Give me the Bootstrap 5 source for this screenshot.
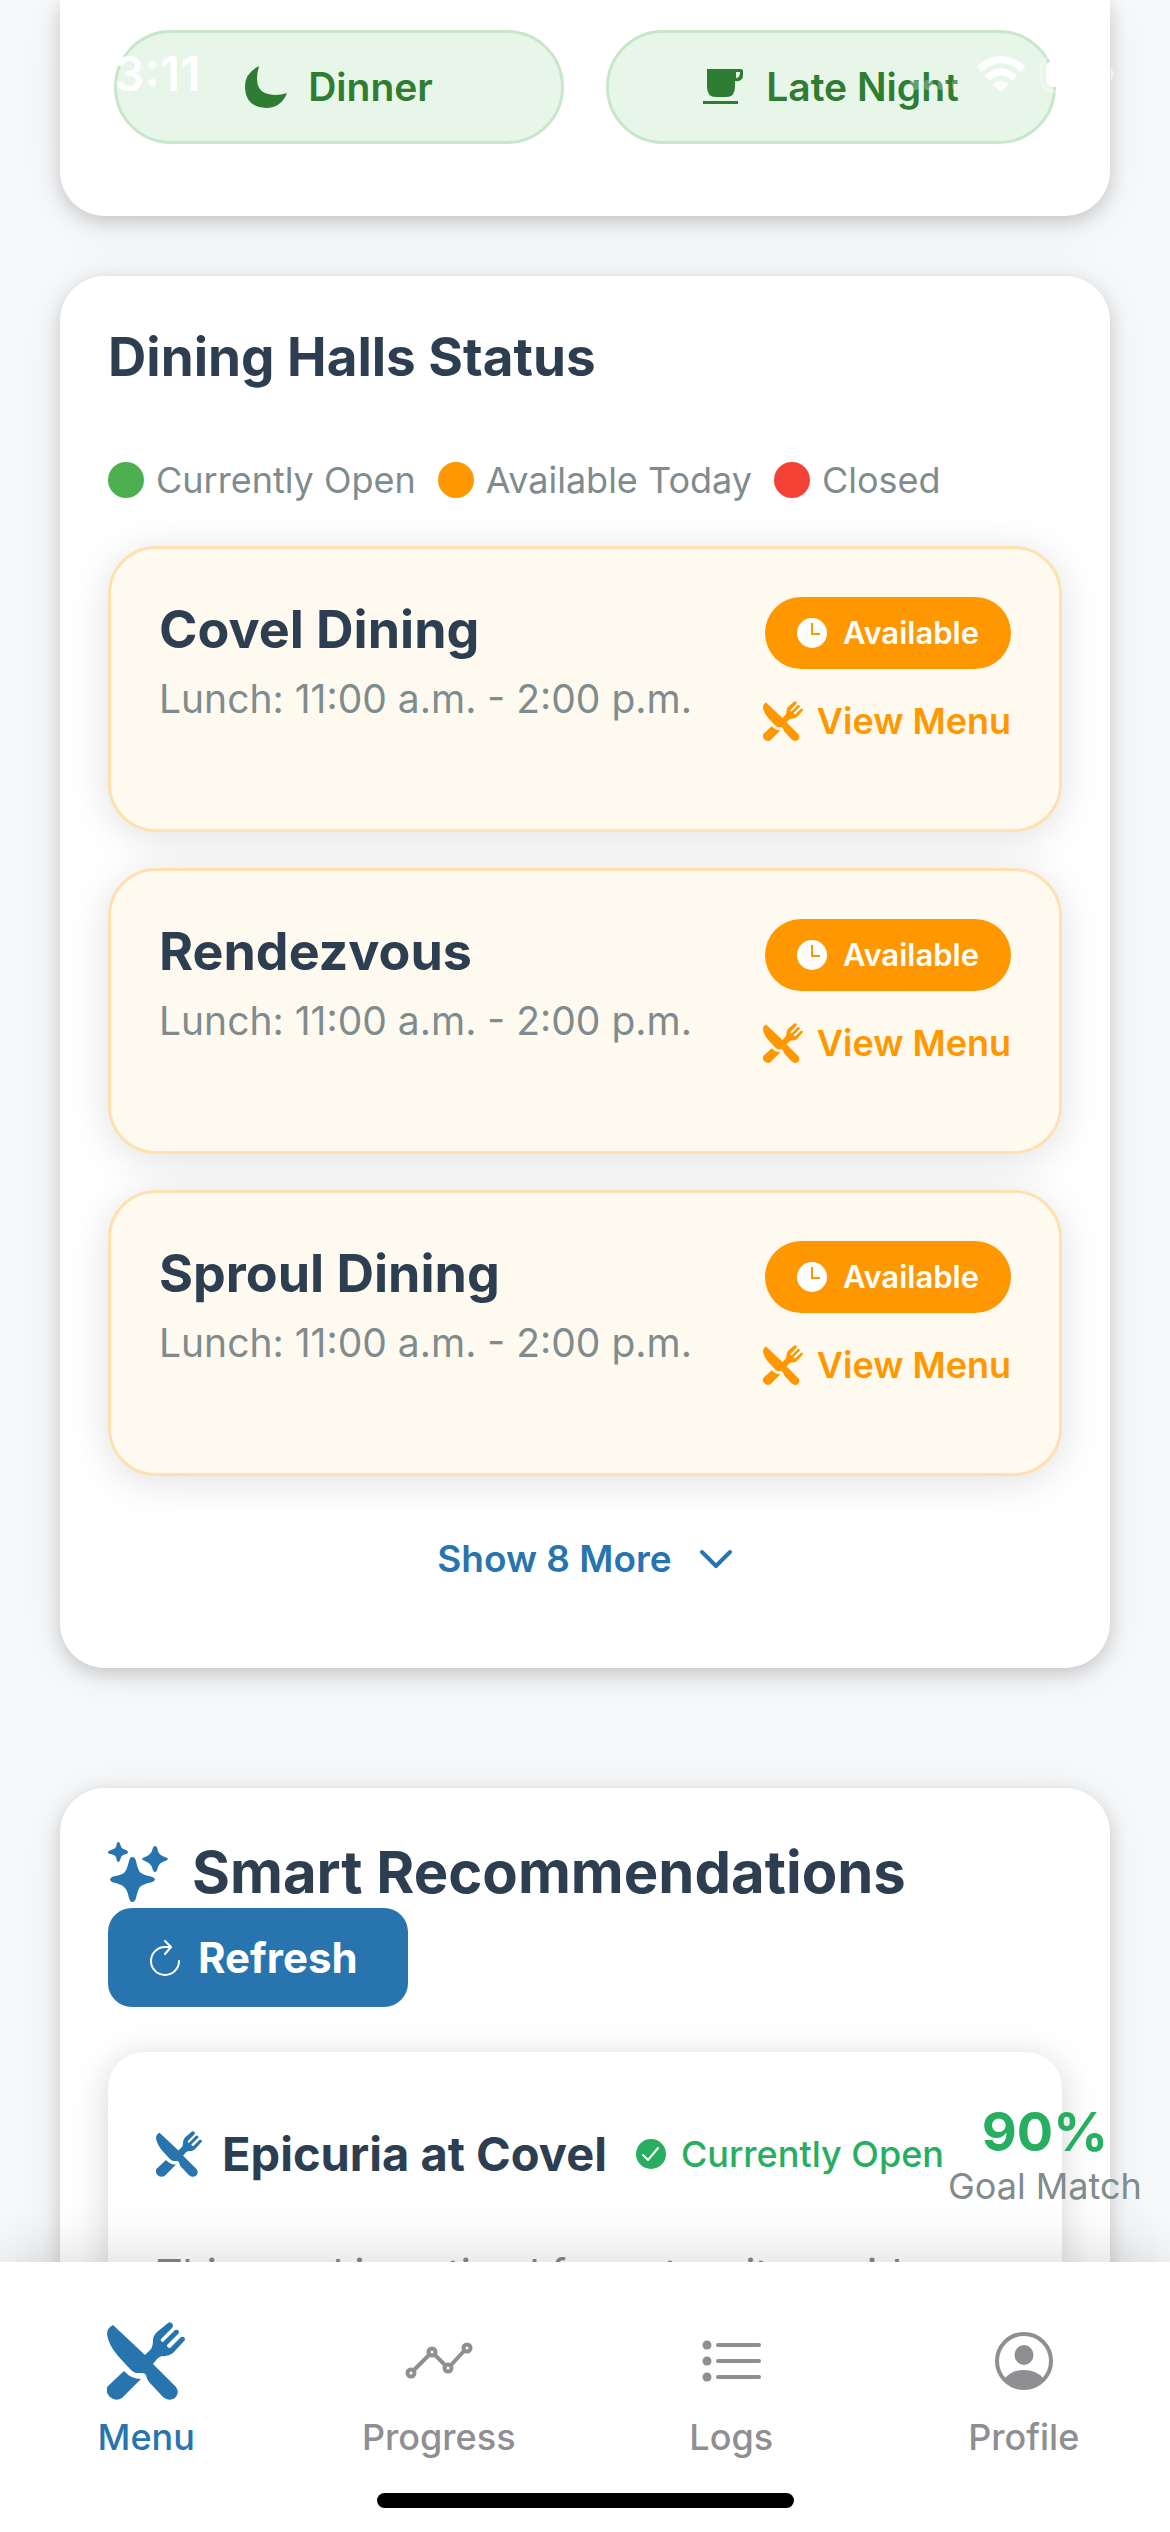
<!DOCTYPE html>
<html lang="en">
<head>
<meta charset="utf-8">
<meta name="viewport" content="width=device-width, initial-scale=1">
<title>Dining Halls</title>
<link href="https://cdn.jsdelivr.net/npm/bootstrap@5.3.0/dist/css/bootstrap.min.css" rel="stylesheet">
<style>
  :root { --ink: #2c3e50; --muted: #7f8c8d; --brand: #2874ae; --amber: #ff9800; --leaf: #2e7d32; --ok: #27ae60; --tab: #8e8e93; }
  html, body { height: 100%; }
  body { font-family: Inter, "Liberation Sans", sans-serif; font-size: 36px; line-height: 44px; color: var(--ink); background: #f8f9fb; }
  svg { display: block; flex: none; }
  .app-shell { height: 100vh; overflow: hidden; }
  .scroll-area { min-height: 0; overflow: hidden; padding: 0 60px; }
  .panel { background: #fff; border-radius: 45px; padding: 48px; box-shadow: 0 6px 18px rgba(0,0,0,.16), 0 6px 54px rgba(0,0,0,.08); }
  .panel-meals { border-top-left-radius: 0; border-top-right-radius: 0; padding: 30px 54px 72px; margin-bottom: 60px; }
  .panel-halls { margin-bottom: 120px; padding-bottom: 72px; }
  .meal-grid { gap: 42px; }
  .meal-btn { flex: 1 1 0; height: 114px; gap: 21px; border: 3px solid #c8e6c9; border-radius: 57px; background: #e8f5e9; color: var(--leaf); font-size: 39px; font-weight: 600; }
  .panel-title { font-size: 53px; line-height: 66px; font-weight: 700; margin: 0; }
  .legend { gap: 22px; margin: 69px 0 45px; color: var(--muted); font-size: 36px; line-height: 42px; list-style: none; padding: 0; }
  .legend li { gap: 12px; }
  .dot { width: 36px; height: 36px; border-radius: 50%; }
  .dot-open { background: #4caf50; } .dot-today { background: var(--amber); } .dot-closed { background: #f44336; }
  .hall-list { gap: 36px; }
  .hall { height: 286px; padding: 48px; border: 3px solid #ffe0b2; border-radius: 48px; background: #fffaf0; box-shadow: 0 6px 42px rgba(0,0,0,.12); }
  .hall-name { font-size: 52px; line-height: 66px; font-weight: 700; margin: 0; }
  .hall-hours { color: var(--muted); font-size: 39px; line-height: 48px; margin: 12px 0 0; }
  .hall-badge { height: 72px; padding: 0 32px; gap: 16px; border-radius: 36px; background: var(--amber); color: #fff; font-size: 31px; font-weight: 600; }
  .link-menu { gap: 14px; margin-top: 30px; color: var(--amber); font-weight: 600; text-decoration: none; }
  .show-more { margin: 46px auto 0; padding: 15px 24px; gap: 27px; border: 0; background: none; color: var(--brand); font-size: 37px; line-height: 44px; font-weight: 600; }
  .rec-title { font-size: 58px; line-height: 72px; font-weight: 700; margin: 0; }
  .rec-head { gap: 24px; }
  .refresh-btn { width: 300px; height: 99px; padding: 0 41px; gap: 17px; border: 0; border-radius: 24px; background: var(--brand); color: #fff; font-size: 42px; font-weight: 700; }
  .rec { margin-top: 45px; padding: 48px; height: 400px; border-radius: 36px; background: #fff; box-shadow: 0 6px 36px rgba(0,0,0,.17); }
  .rec-name { font-size: 47px; line-height: 60px; font-weight: 700; margin: 0 0 0 20px; }
  .rec-open { gap: 15px; color: var(--ok); margin: 0 4px 0 29px; font-weight: 500; }
  .score { color: var(--ok); font-size: 54px; line-height: 64px; font-weight: 700; }
  .score-label { color: var(--muted); }
  .rec-text { color: var(--muted); font-size: 41px; line-height: 54px; margin: 39px 0 0; }
  .tabs { position: relative; z-index: 2; height: 270px; background: #fff; box-shadow: 0 -6px 54px rgba(0,0,0,.14); }
  .tab { padding-top: 54px; color: var(--tab); font-weight: 500; text-decoration: none; }
  .tab.active { color: var(--brand); }
  .tab svg { margin-bottom: 9px; }
  .home-bar { width: 417px; height: 15px; margin: auto auto 24px; border-radius: 8px; background: #000; }
  .status-bar { position: absolute; inset: 0 0 auto 0; height: 148px; padding: 0 54px 0 114px; color: #fff; font-size: 48px; font-weight: 600; z-index: 3; }
  .status-icons { gap: 15px; }
</style>
</head>
<body>
<svg width="0" height="0" class="position-absolute" aria-hidden="true">
  <symbol id="cutlery" viewBox="0 0 78 78">
    <path d="M6 3 38 33 44 27Q46 24 46 18Q46 14 50 10L61 1Q64-1 66 3Q66 5 65 6L54 17Q53 20 56 20L68 8Q72 7 72 11L60 23Q60 26 63 26L74 15Q78 14 78 18L66 31Q61 35 55 34Q52 35 50 37L46 42 69 65Q73 71 68 76Q62 80 56 75L42 60Q40 58 39 53Q38 51 35 51H29Q26 50 24 48L11 34Q1 22 0 12Q0 6 6 3Z" fill="currentColor"/>
    <path d="M17 49Q24 57 34 57L15 76Q9 80 3 75Q-3 69 1 64Z" fill="currentColor"/>
  </symbol>
  <symbol id="clock" viewBox="0 0 30 30"><circle cx="15" cy="15" r="15" fill="#fff"/><path d="M15 5v11h8" fill="none" stroke="#ff9800" stroke-width="2"/></symbol>
</svg>

<div class="app-shell d-flex flex-column position-relative">
  <div class="status-bar d-flex align-items-center justify-content-between">
    <span>3:11</span>
    <span class="status-icons d-flex align-items-center">
      <svg width="52" height="36" viewBox="0 0 52 36"><g fill="#fff" opacity=".25"><rect x="0" y="24" width="9" height="10" rx="3"/><rect x="14" y="24" width="9" height="10" rx="3"/><rect x="28" y="24" width="9" height="10" rx="3"/><rect x="42" y="24" width="9" height="10" rx="3"/></g></svg>
      <svg width="48" height="36" viewBox="0 0 48 36"><g fill="none" stroke="#fff" stroke-width="7"><path d="M2 13Q24-6 46 13"/><path d="M10 22Q24 10 38 22"/></g><path d="M24 36 16 28Q24 22 32 28Z" fill="#fff"/></svg>
      <svg width="76" height="38" viewBox="0 0 76 38"><rect x="1.500" y="1.500" width="66" height="35" rx="11" fill="none" stroke="#fff" stroke-width="3" opacity=".35"/><rect x="6" y="6" width="57" height="26" rx="7" fill="#fff"/><path d="M71 13q5 6 0 12z" fill="#fff" opacity=".6"/></svg>
    </span>
  </div>

  <main class="scroll-area flex-grow-1">
    <section class="panel panel-meals">
      <div class="meal-grid d-flex">
        <button type="button" class="meal-btn d-flex align-items-center justify-content-center">
          <svg width="42" height="42" viewBox="0 0 42 42"><path d="M14 0Q8 22 20 27Q30 31 42 27Q36 42 21 42Q0 41 0 20Q0 7 14 0Z" fill="currentColor"/></svg>
          Dinner
        </button>
        <button type="button" class="meal-btn d-flex align-items-center justify-content-center">
          <svg width="42" height="36" viewBox="0 0 42 36"><path fill-rule="evenodd" d="M4 0H38Q40 0 40 2V6Q40 13 32 12V18Q32 28 23 28H13Q4 28 4 18ZM33 3V9Q37 9 37 3ZM0 32H35V35H0Z" fill="currentColor"/></svg>
          Late Night
        </button>
      </div>
    </section>

    <section class="panel panel-halls d-flex flex-column">
      <h2 class="panel-title">Dining Halls Status</h2>
      <ul class="legend d-flex">
        <li class="d-flex align-items-center"><span class="dot dot-open"></span>Currently Open</li>
        <li class="d-flex align-items-center"><span class="dot dot-today"></span>Available Today</li>
        <li class="d-flex align-items-center"><span class="dot dot-closed"></span>Closed</li>
      </ul>
      <div class="hall-list d-flex flex-column">
        <article class="hall d-flex justify-content-between">
          <div><h3 class="hall-name">Covel Dining</h3><p class="hall-hours">Lunch: 11:00 a.m. - 2:00 p.m.</p></div>
          <div class="d-flex flex-column align-items-end">
            <span class="hall-badge d-flex align-items-center"><svg width="30" height="30"><use href="#clock"/></svg>Available</span>
            <a href="#" class="link-menu d-flex align-items-center"><svg width="40" height="40"><use href="#cutlery"/></svg>View Menu</a>
          </div>
        </article>
        <article class="hall d-flex justify-content-between">
          <div><h3 class="hall-name">Rendezvous</h3><p class="hall-hours">Lunch: 11:00 a.m. - 2:00 p.m.</p></div>
          <div class="d-flex flex-column align-items-end">
            <span class="hall-badge d-flex align-items-center"><svg width="30" height="30"><use href="#clock"/></svg>Available</span>
            <a href="#" class="link-menu d-flex align-items-center"><svg width="40" height="40"><use href="#cutlery"/></svg>View Menu</a>
          </div>
        </article>
        <article class="hall d-flex justify-content-between">
          <div><h3 class="hall-name">Sproul Dining</h3><p class="hall-hours">Lunch: 11:00 a.m. - 2:00 p.m.</p></div>
          <div class="d-flex flex-column align-items-end">
            <span class="hall-badge d-flex align-items-center"><svg width="30" height="30"><use href="#clock"/></svg>Available</span>
            <a href="#" class="link-menu d-flex align-items-center"><svg width="40" height="40"><use href="#cutlery"/></svg>View Menu</a>
          </div>
        </article>
      </div>
      <button type="button" class="show-more d-flex align-items-center">Show 8 More
        <svg width="34" height="20" viewBox="0 0 34 20"><path d="M3 3 17 17 31 3" fill="none" stroke="currentColor" stroke-width="4" stroke-linecap="round" stroke-linejoin="round"/></svg>
      </button>
    </section>

    <section class="panel">
      <div class="rec-head d-flex align-items-center">
        <svg width="60" height="60" viewBox="0 0 60 60" fill="#2874ae"><path d="M24 15Q27 15 28 19Q30 29 33 31Q36 33 43 34.500Q47 36 47 37.500Q47 39 43 40.500Q35 42 32 45Q30 47 28 56Q27 60 24 60Q22 60 21 56Q19 47 16 45Q13 42 5 40.500Q2 39 2 37.500Q2 36 5 34.500Q13 33 16 31Q19 28 21 19Q22 15 24 15Z"/><path d="M10 0Q12 0 13 5Q14 7 18 8Q20 9 20 10Q20 12 18 12Q14 13 13 15Q12 20 10 20Q9 20 8 15Q7 13 3 12Q0 12 0 10Q0 9 3 8Q7 7 8 5Q9 0 10 0Z"/><path d="M47 4Q49 4 50 9Q51 13 57 15Q60 16 60 17Q60 18 57 19Q51 21 50 25Q49 30 47 30Q45 30 44 25Q42 21 37 19Q34 18 34 17Q34 16 37 15Q42 13 44 9Q45 4 47 4Z"/></svg>
        <h2 class="rec-title">Smart Recommendations</h2>
      </div>
      <button type="button" class="refresh-btn d-flex align-items-center">
        <svg width="32" height="36" viewBox="0 0 32 36"><path d="M30 21A14 14 0 1 1 16 7H22M16 1 22 7 16 14" fill="none" stroke="#fff" stroke-width="2" stroke-linecap="round" stroke-linejoin="round"/></svg>
        Refresh
      </button>
      <article class="rec">
        <div class="d-flex align-items-center text-nowrap">
          <svg width="46" height="46" color="#2874ae"><use href="#cutlery"/></svg>
          <h3 class="rec-name">Epicuria at Covel</h3>
          <span class="rec-open d-flex align-items-center">
            <svg width="30" height="30" viewBox="0 0 30 30"><circle cx="15" cy="15" r="15" fill="currentColor"/><path d="M7 16 12 21 22 9" fill="none" stroke="#fff" stroke-width="2" stroke-linecap="round" stroke-linejoin="round"/></svg>
            Currently Open
          </span>
          <div class="text-center"><div class="score">90%</div><div class="score-label">Goal Match</div></div>
        </div>
        <p class="rec-text">This meal is optimal for cut as it provides</p>
      </article>
    </section>
  </main>

  <nav class="tabs d-flex flex-column flex-shrink-0" aria-label="Main">
    <div class="d-flex">
      <a href="#" class="tab active col-3 d-flex flex-column align-items-center" aria-current="page">
        <svg width="78" height="90" viewBox="0 0 78 90"><use href="#cutlery" y="6" width="78" height="78"/></svg>Menu</a>
      <a href="#" class="tab col-3 d-flex flex-column align-items-center">
        <svg width="78" height="90" viewBox="0 0 78 90"><g fill="none" stroke="currentColor" stroke-width="4"><path d="M14 54 29 39M35 39 45 49M51 49 64 35"/><circle cx="11" cy="57" r="3.500"/><circle cx="32" cy="36" r="3.500"/><circle cx="48" cy="52" r="3.500"/><circle cx="67" cy="32" r="3.500"/></g></svg>Progress</a>
      <a href="#" class="tab col-3 d-flex flex-column align-items-center">
        <svg width="78" height="90" viewBox="0 0 78 90"><g fill="currentColor"><circle cx="15" cy="29" r="4.500"/><circle cx="15" cy="45" r="4.500"/><circle cx="15" cy="61" r="4.500"/></g><path d="M26 29H67M26 45H67M26 61H67" fill="none" stroke="currentColor" stroke-width="4" stroke-linecap="round"/></svg>Logs</a>
      <a href="#" class="tab col-3 d-flex flex-column align-items-center">
        <svg width="78" height="90" viewBox="0 0 78 90"><circle cx="39" cy="45" r="27" fill="none" stroke="currentColor" stroke-width="4"/><ellipse cx="39" cy="39" rx="9.500" ry="10" fill="currentColor"/><path d="M20 62Q27 54 39 54T58 62Q50 73 39 73T20 62Z" fill="currentColor"/></svg>Profile</a>
    </div>
    <div class="home-bar"></div>
  </nav>
</div>
<script src="https://cdn.jsdelivr.net/npm/bootstrap@5.3.0/dist/js/bootstrap.bundle.min.js"></script>
</body>
</html>
